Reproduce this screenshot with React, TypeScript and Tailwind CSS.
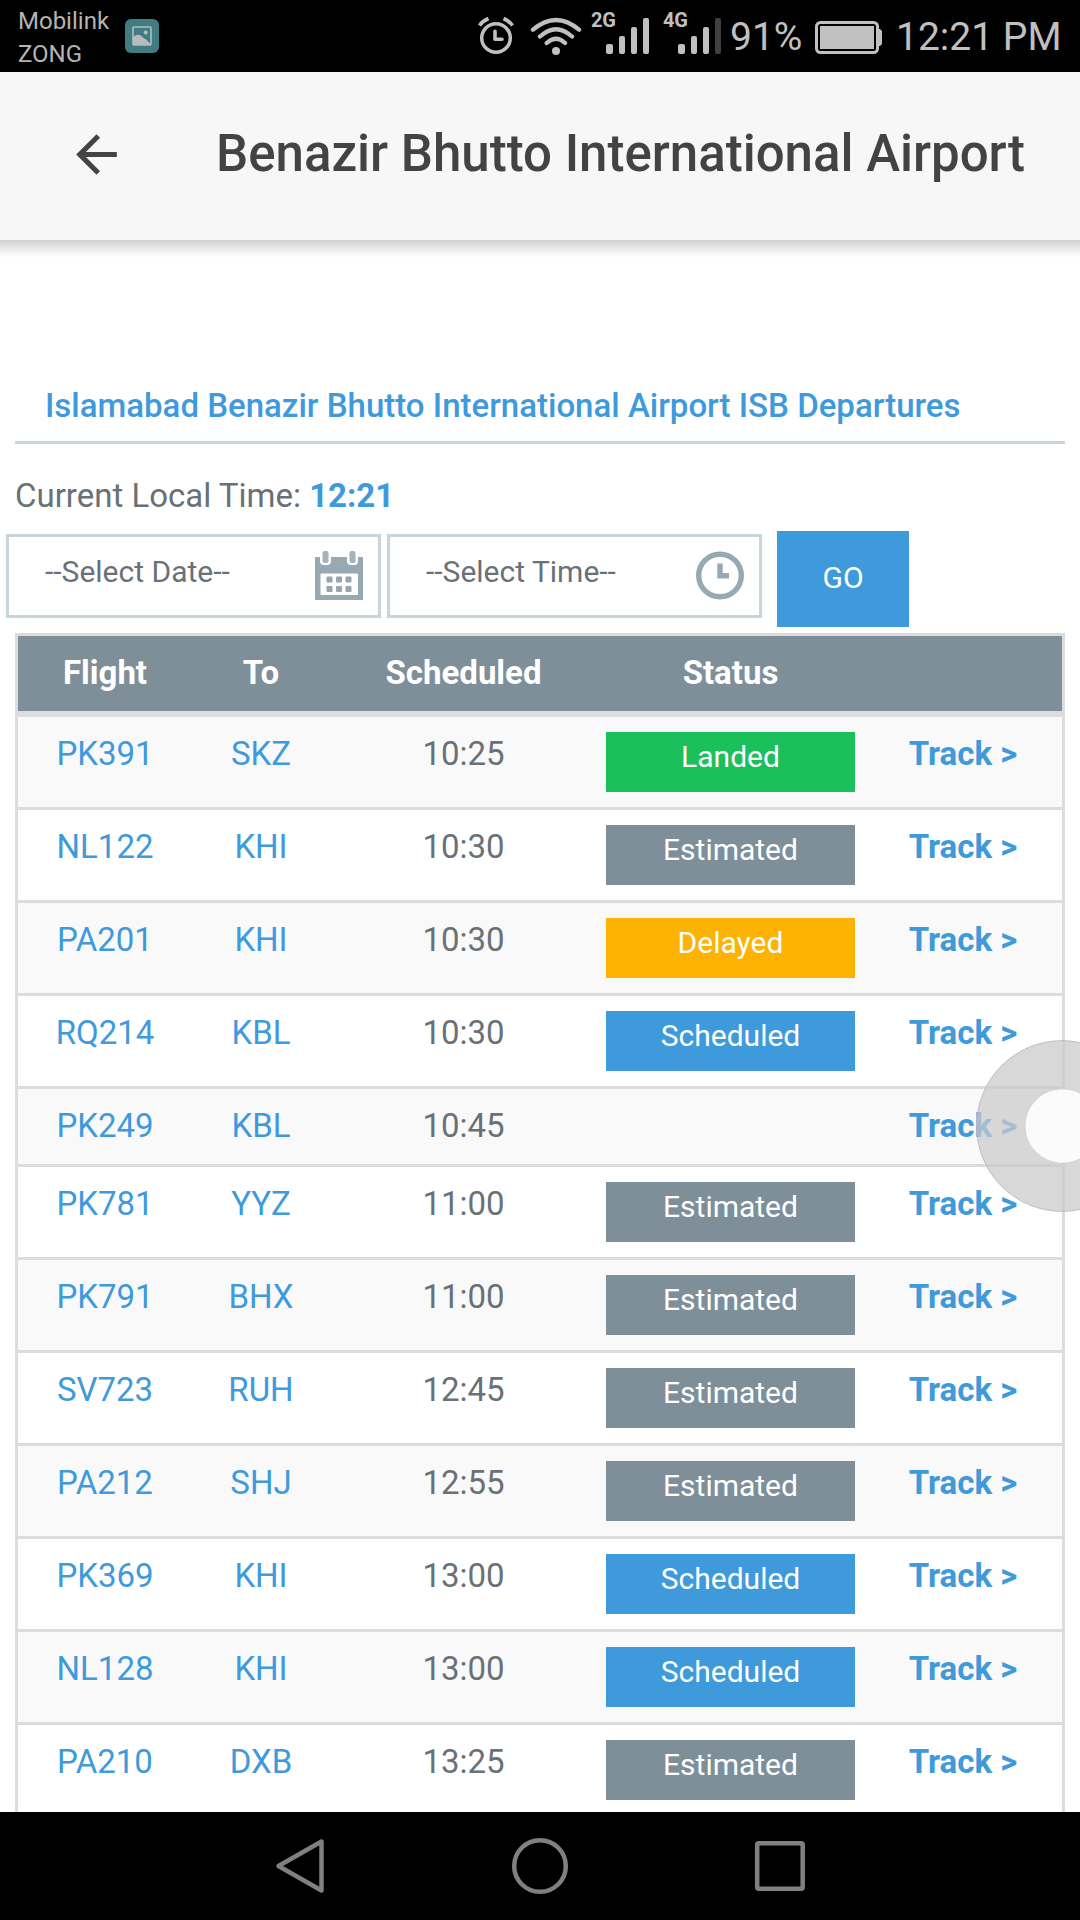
type Status = "Landed" | "Estimated" | "Delayed" | "Scheduled" | "";

const STATUS_BG: Record<Exclude<Status, "">, string> = {
  Landed: "bg-[#1bbf5b]",
  Estimated: "bg-[#7f8f99]",
  Delayed: "bg-[#fdb204]",
  Scheduled: "bg-[#3f9adc]",
};

const FLIGHTS: { flight: string; to: string; time: string; status: Status }[] = [
  { flight: "PK391", to: "SKZ", time: "10:25", status: "Landed" },
  { flight: "NL122", to: "KHI", time: "10:30", status: "Estimated" },
  { flight: "PA201", to: "KHI", time: "10:30", status: "Delayed" },
  { flight: "RQ214", to: "KBL", time: "10:30", status: "Scheduled" },
  { flight: "PK249", to: "KBL", time: "10:45", status: "" },
  { flight: "PK781", to: "YYZ", time: "11:00", status: "Estimated" },
  { flight: "PK791", to: "BHX", time: "11:00", status: "Estimated" },
  { flight: "SV723", to: "RUH", time: "12:45", status: "Estimated" },
  { flight: "PA212", to: "SHJ", time: "12:55", status: "Estimated" },
  { flight: "PK369", to: "KHI", time: "13:00", status: "Scheduled" },
  { flight: "NL128", to: "KHI", time: "13:00", status: "Scheduled" },
  { flight: "PA210", to: "DXB", time: "13:25", status: "Estimated" },
];

function Signal({ label, dimLast }: { label: string; dimLast?: boolean }) {
  return (
    <div className="relative h-[72px] w-[60px]">
      <span className="absolute top-[9px] left-0 text-[20px] leading-[22px] font-bold tracking-[-0.2px]">{label}</span>
      <svg className="absolute top-[18px] left-[15px]" width="44" height="36" viewBox="0 0 44 36" fill="#c0c0c0">
        <rect x="0" y="26" width="7" height="10" rx="2" />
        <rect x="13" y="18" width="6" height="18" rx="2" />
        <rect x="25" y="9" width="6" height="27" rx="2" />
        <rect x="37" y="0" width="6" height="36" rx="2" fill={dimLast ? "#404040" : "#c0c0c0"} />
      </svg>
    </div>
  );
}

function StatusBar() {
  return (
    <div className="flex h-[72px] shrink-0 items-start bg-black text-[#c0c0c0]">
      <div className="mt-[5px] ml-[18px] w-[107px] text-[24px] leading-[33px] text-[#b4b4b4]">
        <div>Mobilink</div>
        <div>ZONG</div>
      </div>
      <svg className="mt-[19px]" width="34" height="34" viewBox="0 0 34 34">
        <rect width="34" height="34" rx="6" fill="#3f7d82" />
        <rect x="8" y="8" width="18" height="18" rx="1" fill="none" stroke="#b7bcbc" strokeWidth="1.6" />
        <circle cx="20.7" cy="13.5" r="2" fill="#b7bcbc" />
        <path d="M8 18.500c3-4 7.500-3.500 10 0 1 1.400 2 .8 3.500 2.200L26 25.500V26H8z" fill="#b7bcbc" />
      </svg>
      <svg className="mt-[16px] ml-[318px]" width="38" height="40" viewBox="0 0 38 40" fill="none" stroke="#c0c0c0">
        <circle cx="19" cy="22" r="14.300" strokeWidth="3.500" />
        <path d="M18 15.300v8h7" strokeWidth="3.600" strokeLinecap="round" strokeLinejoin="round" />
        <path d="M2.500 9.500Q5.500 5 11.500 2.500M35.500 9.500Q32.500 5 26.500 2.500" strokeWidth="3.600" />
      </svg>
      <svg className="mt-[16px] ml-[15px]" width="52" height="40" viewBox="0 0 52 40" fill="none" stroke="#c0c0c0" strokeWidth="4.300" strokeLinecap="round">
        <path d="M3 13.700Q26-5.700 49 13.700M10 20.500Q26 6 42 20.500M16.700 27Q26 18.700 35 27" />
        <circle cx="26" cy="35" r="4" fill="#c0c0c0" stroke="none" />
      </svg>
      <div className="ml-[9px] flex gap-[12px]">
        <Signal label="2G" />
        <Signal label="4G" dimLast />
      </div>
      <span className="ml-[7px] w-[85px] text-[39px] leading-[75px]">91%</span>
      <svg className="mt-[21px]" width="67" height="33" viewBox="0 0 67 33" fill="#c0c0c0">
        <rect x="1.500" y="1.500" width="61" height="30" rx="4" fill="none" stroke="#c0c0c0" strokeWidth="3" />
        <rect x="5" y="5" width="54" height="23" />
        <path d="M63 8h2l2 2v13l-2 2h-2z" />
      </svg>
      <span className="ml-[14px] text-[39px] leading-[75px] whitespace-nowrap">12:21 PM</span>
    </div>
  );
}

function CalendarIcon() {
  return (
    <svg width="48" height="49" viewBox="0 0 48 49">
      <path d="M0 6h48v43H0z" fill="#98a9b4" />
      <rect x="5" y="0" width="11" height="14" rx="4" fill="#fff" />
      <rect x="32" y="0" width="11" height="14" rx="4" fill="#fff" />
      <rect x="7.500" y="0" width="6" height="12" rx="2" fill="#a3b2bb" />
      <rect x="34.500" y="0" width="6" height="12" rx="2" fill="#a3b2bb" />
      <rect x="5.500" y="22.500" width="37.500" height="21.500" rx="1" fill="#fff" />
      <g fill="#98a5ae">
        <rect x="11.500" y="25.500" width="6" height="6" rx="1" />
        <rect x="21" y="25.500" width="6" height="6" rx="1" />
        <rect x="30.500" y="25.500" width="6" height="6" rx="1" />
        <rect x="11.500" y="35" width="6" height="6" rx="1" />
        <rect x="21" y="35" width="6" height="6" rx="1" />
        <rect x="30.500" y="35" width="6" height="6" rx="1" />
      </g>
    </svg>
  );
}

function ClockIcon() {
  return (
    <svg width="48" height="49" viewBox="0 0 48 49" fill="none" stroke="#98a9b4">
      <circle cx="24" cy="24.500" r="21.300" strokeWidth="5.400" />
      <path d="M24 12.500v12.200h9" strokeWidth="5.400" />
    </svg>
  );
}

function Select({ label, icon }: { label: string; icon: React.ReactNode }) {
  return (
    <div className="mt-[3px] flex h-[84px] w-[375px] justify-between border-[3px] border-[#c9d5dd] pr-[15px] pl-[36px]">
      <span className="text-[30px] leading-[69px] text-[#6a7176]">{label}</span>
      <span className="mt-[14px]">{icon}</span>
    </div>
  );
}

const COLS = "grid grid-cols-[174px_138px_267px_267px_198px] text-center text-[33px] leading-[73px]";

export default function App() {
  return (
    <div className="relative flex h-[1920px] w-[1080px] flex-col overflow-hidden bg-white font-['Roboto',sans-serif]">
      <StatusBar />
      <header className="relative flex h-[168px] shrink-0 bg-[#f7f7f7]">
        <svg className="mt-[52px] ml-[66px]" width="61" height="61" viewBox="0 0 24 24" fill="#444">
          <path d="M20 11H7.830l5.590-5.590L12 4l-8 8 8 8 1.410-1.410L7.830 13H20v-2z" />
        </svg>
        <h1 className="ml-[89px] text-[51px] leading-[164px] font-medium whitespace-nowrap text-[#434343]">
          Benazir Bhutto International Airport
        </h1>
        <div className="absolute top-full left-0 h-[17px] w-full bg-linear-to-b from-[#cfcfcf] via-[#e9e9e9] to-white" />
      </header>

      <main className="flex min-h-0 flex-1 flex-col overflow-hidden">
        <h2 className="mx-[15px] mt-[131px] h-[73px] shrink-0 border-b-[3px] border-[#c9d5dd] pl-[30px] text-[33px] leading-[69px] font-medium whitespace-nowrap text-[#3f9adc]">
          Islamabad Benazir Bhutto International Airport ISB Departures
        </h2>
        <p className="mt-[26px] ml-[15px] h-[61px] shrink-0 text-[33px] leading-[52px] text-[#6a7176]">
          Current Local Time: <b className="font-bold text-[#3f9adc]">12:21</b>
        </p>
        <div className="flex h-[96px] shrink-0 pl-[6px]">
          <Select label="--Select Date--" icon={<CalendarIcon />} />
          <div className="w-[6px]" />
          <Select label="--Select Time--" icon={<ClockIcon />} />
          <button className="ml-[15px] h-[96px] w-[132px] bg-[#3f9adc] pb-[3px] text-[30px] text-white">GO</button>
        </div>

        <div className="mx-[15px] mt-[6px] border-[3px] border-[#dcdcdc]">
          <div className={`${COLS} h-[81px] border-b-[6px] border-[#d9dee0] bg-[#7f8f99] font-bold text-white`}>
            <span>Flight</span>
            <span>To</span>
            <span>Scheduled</span>
            <span>Status</span>
          </div>
          {FLIGHTS.map((f) => (
            <div
              key={f.flight}
              className={`${COLS} border-b-[3px] border-[#dcdcdc] odd:bg-white even:bg-[#f9f9f9] ${f.status ? "h-[93px]" : "h-[78px]"}`}
            >
              <span className="text-[#3f9adc]">{f.flight}</span>
              <span className="text-[#3f9adc]">{f.to}</span>
              <span className="text-[#6a7176]">{f.time}</span>
              <span className="flex justify-center pt-[15px]">
                {f.status && (
                  <span className={`h-[60px] w-[249px] text-[30px] leading-[49px] text-white ${STATUS_BG[f.status]}`}>
                    {f.status}
                  </span>
                )}
              </span>
              <span className="font-bold text-[#3f9adc]">Track &gt;</span>
            </div>
          ))}
        </div>
      </main>

      <nav className="flex h-[108px] shrink-0 items-center justify-center gap-[185px] bg-black">
        <svg width="52" height="58" viewBox="0 0 52 58" fill="none" stroke="#808080" strokeWidth="4.500" strokeLinejoin="round">
          <path d="M47.500 4.500v49L4.500 29z" />
        </svg>
        <svg width="58" height="58" viewBox="0 0 58 58" fill="none" stroke="#808080" strokeWidth="4.500">
          <circle cx="29" cy="29" r="25.800" />
        </svg>
        <svg width="52" height="52" viewBox="0 0 52 52" fill="none" stroke="#808080" strokeWidth="4.500">
          <rect x="3.200" y="3.200" width="45.500" height="45.500" rx="1.500" />
        </svg>
      </nav>

      {/* Floating assistive button, half off the right edge */}
      <div className="absolute top-[1040px] left-[976px] flex h-[172px] w-[172px] items-center justify-center">
        <svg width="172" height="172" viewBox="0 0 172 172">
          <circle cx="86" cy="86" r="61" fill="none" stroke="#c9c9c9" strokeOpacity="0.73" strokeWidth="49" />
          <circle cx="86" cy="86" r="85.400" fill="none" stroke="#b0b0b0" strokeOpacity="0.7" />
          <circle cx="86.500" cy="86" r="36.500" fill="#fbfbfb" />
        </svg>
      </div>
    </div>
  );
}
